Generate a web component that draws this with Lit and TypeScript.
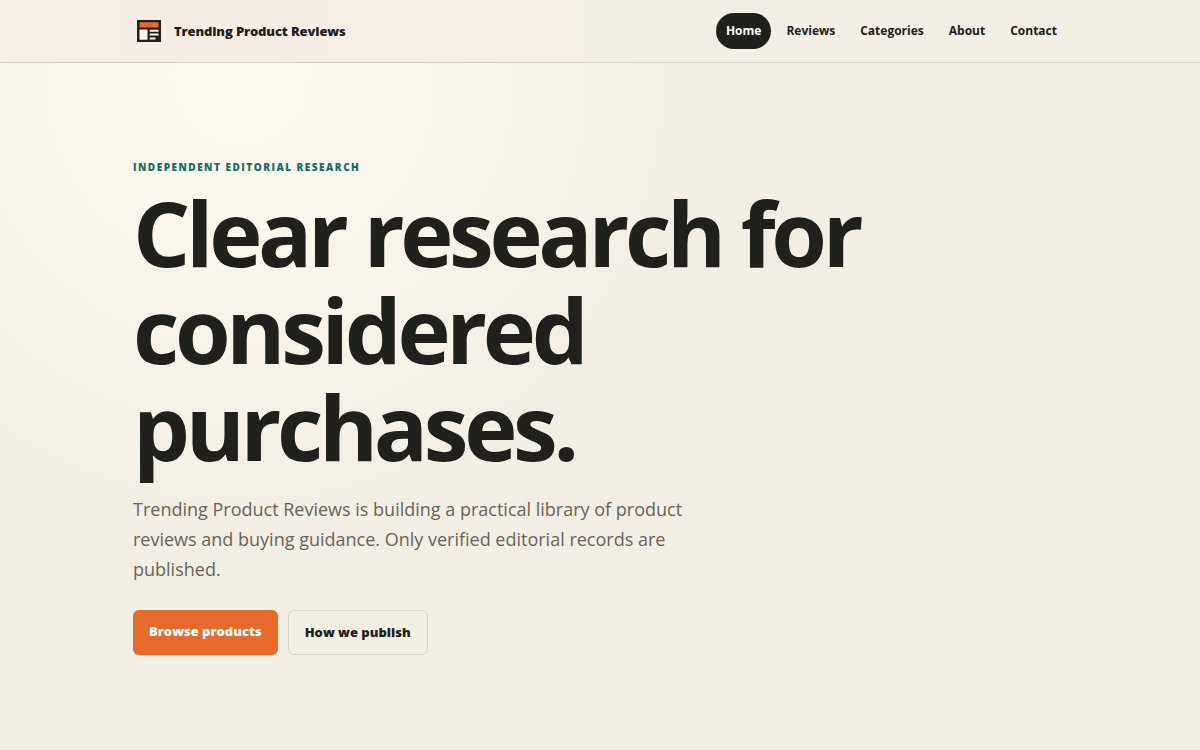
import { LitElement, html, css } from "lit";
import { customElement, state } from "lit/decorators.js";

const NAV_ITEMS = ["Home", "Reviews", "Categories", "About", "Contact"];

@customElement("app-root")
export class AppRoot extends LitElement {
  static styles = css`
    :host {
      display: block;
      min-height: 100vh;
      box-sizing: border-box;
      color: #20201c;
      font-family: "Open Sans", sans-serif;
      font-size: 16px;
      line-height: 24px;
      background: radial-gradient(circle at 20% 10%, #fefaef 0, transparent 448px) #f4efe4;
    }
    .header {
      border-bottom: 1px solid #dcd5c7;
      background: linear-gradient(90deg, #f7eee5, #f5efe5 48%, #f4efe4 50%);
    }
    .shell {
      width: min(calc(100% - 32px), 934px);
      margin: 0 auto;
    }
    .bar {
      display: flex;
      align-items: center;
      justify-content: space-between;
      gap: 24px;
      min-height: 62px;
    }
    .brand {
      display: inline-flex;
      align-items: center;
      gap: 9px;
      color: inherit;
      font-size: 13px;
      font-weight: 800;
      letter-spacing: -0.01em;
      text-decoration: none;
    }
    .mark {
      width: 32px;
      height: 32px;
    }
    .nav {
      display: flex;
      gap: 5px;
    }
    .link {
      padding: 7px 10px;
      border-radius: 999px;
      color: inherit;
      font-size: 12px;
      line-height: 22px;
      font-weight: 700;
      text-decoration: none;
    }
    .current {
      background: #20201c;
      color: #fff;
    }
    .hero {
      padding: 96px 0;
    }
    .eyebrow {
      margin: 0;
      color: #176b66;
      font-size: 10px;
      line-height: 16px;
      font-weight: 800;
      letter-spacing: 0.15em;
      text-transform: uppercase;
    }
    .title {
      max-width: 820px;
      margin: 9px 0 19px;
      font-size: 90px;
      line-height: 97px;
      font-weight: 700;
      letter-spacing: -0.048em;
    }
    .lead {
      max-width: 580px;
      margin: 0;
      color: #68645b;
      font-size: 18px;
      line-height: 30px;
    }
    .actions {
      display: flex;
      flex-wrap: wrap;
      gap: 10px;
      margin-top: 26px;
    }
    .button {
      padding: 11px 16px;
      border-radius: 6px;
      color: inherit;
      font-size: 13px;
      line-height: 21px;
      font-weight: 800;
      text-decoration: none;
    }
    .primary {
      background: #e66a2c;
      color: #fff;
    }
    .secondary {
      border: 1px solid #dcd5c7;
    }
  `;

  @state() private current = "Home";

  render() {
    return html`
      <header class="header">
        <div class="shell bar">
          <a class="brand" href="#home">
            <svg class="mark" viewBox="0 0 32 32" aria-hidden="true">
              <path fill="#20201c" d="M4 5h24v22H4z" />
              <path fill="#e66a2c" d="M6.5 7.2h19v5.3h-19z" />
              <path
                fill="#faf6ec"
                d="M6.5 14.5h8v10.2h-8zM16.7 14.8h8.8v2h-8.8zM16.7 18.6h8.8v2h-8.8zM16.7 22.5h5.8v1.9h-5.8z"
              />
            </svg>
            <span>Trending Product Reviews</span>
          </a>
          <nav class="nav" aria-label="Main">
            ${NAV_ITEMS.map(
              (item) => html`<a
                class="link ${item === this.current ? "current" : ""}"
                href="#${item.toLowerCase()}"
                @click=${() => (this.current = item)}
                >${item}</a
              >`
            )}
          </nav>
        </div>
      </header>
      <main class="shell hero">
        <p class="eyebrow">Independent editorial research</p>
        <h1 class="title">Clear research for considered purchases.</h1>
        <p class="lead">
          Trending Product Reviews is building a practical library of product reviews and buying
          guidance. Only verified editorial records are published.
        </p>
        <div class="actions">
          <a class="button primary" href="#reviews">Browse products</a>
          <a class="button secondary" href="#about">How we publish</a>
        </div>
      </main>
    `;
  }
}
